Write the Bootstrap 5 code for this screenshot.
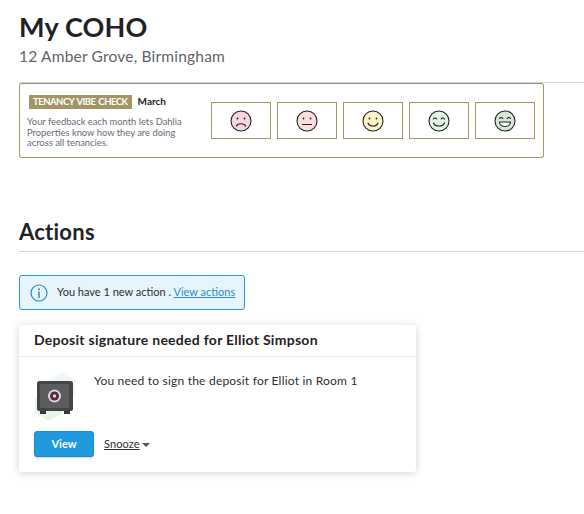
<!DOCTYPE html>
<html lang="en">
<head>
<meta charset="utf-8">
<title>My COHO</title>
<link href="https://cdn.jsdelivr.net/npm/bootstrap@5.3.0/dist/css/bootstrap.min.css" rel="stylesheet">
<style>
html,body{overflow:hidden}
body{font-family:Lato,"Noto Sans",sans-serif;color:#212529;background:#fff;width:584px;height:514px}
.page-wrap{padding:12px 0 0 19px}
.page-title{font-size:27px;font-weight:700;line-height:30px;margin:0;letter-spacing:.2px;color:#1f2226}
.page-sub{font-size:15.5px;line-height:20px;color:#5f6368;margin:4px 0 0;letter-spacing:.2px}
.rule{height:1px;background:#d4d4d4;border:0;opacity:1;margin:0}
.rule-top{margin-top:16px}
.vibe-box{width:525px;height:75px;border:1px solid #a39565;border-top-color:#8f8f8f;border-radius:3px;margin-top:0;padding:10px 8px 0 9px}
.vibe-left{width:173px;flex:none}
.vibe-tag{background:#a39565;color:#fff;font-size:9.5px;font-weight:700;line-height:14px;padding:0 4px;white-space:nowrap;letter-spacing:-.5px;word-spacing:1px}
.vibe-month{font-size:10px;font-weight:700;color:#1f2226;margin-left:6px}
.vibe-text{font-size:9.4px;line-height:10.5px;color:#6a6a78;margin:8px 0 0 -2px;max-width:165px}
.vibe-faces{margin-left:9px;margin-top:8px;gap:6px}
.face-btn{width:60px;height:37px;border:1px solid #a39565;background:#fff;padding:0;display:flex;align-items:center;justify-content:center;border-radius:0}
.actions-title{font-size:22px;font-weight:700;line-height:26px;margin:61px 0 6px;color:#1f2226;letter-spacing:.25px}
.notice{width:226px;height:35px;margin-top:23px;background:#e7f4fb;border:1px solid #1f9ade;border-radius:3px;font-size:11px;color:#2b2f33;padding:0 0 0 10px;gap:9px}
.notice a{color:#2b8ec9}
.task-card{width:397px;height:147px;margin-top:15px;border:0;border-radius:3px;box-shadow:0 1px 8px rgba(0,0,0,.18)}
.task-head{font-size:14px;font-weight:700;line-height:18px;padding:6px 15px 7px;border-bottom:1px solid #ececec;color:#1f2226;letter-spacing:.27px}
.task-body{padding:16px 15px 0}
.task-msg{font-size:12px;line-height:16px;margin:0 0 0 16px;color:#2b2f33;letter-spacing:.21px}
.task-actions{margin-top:10px;gap:10px}
.view-btn{width:60px;height:26px;background:#1f9ade;border:1px solid #1b8ecd;color:#fff;font-size:11px;font-weight:700;padding:0;border-radius:3px;box-shadow:0 1px 2px rgba(0,0,0,.2)}
.snooze-link{font-size:11px;color:#2b2f33;letter-spacing:.1px}
.caret-down{display:inline-block;width:0;height:0;border-left:4px solid transparent;border-right:4px solid transparent;border-top:4px solid #555;margin-left:2px;vertical-align:middle}
</style>
</head>
<body>
<div class="page-wrap">
  <h1 class="page-title">My COHO</h1>
  <p class="page-sub">12 Amber Grove, Birmingham</p>
  <hr class="rule rule-top">
  <div class="vibe-box d-flex">
    <div class="vibe-left">
      <div class="d-flex align-items-center"><span class="vibe-tag">TENANCY VIBE CHECK</span><span class="vibe-month">March</span></div>
      <p class="vibe-text">Your feedback each month lets Dahlia Properties know how they are doing across all tenancies.</p>
    </div>
    <div class="vibe-faces d-flex flex-grow-1">
      <button class="face-btn" aria-label="Very unhappy"><svg width="22" height="22" viewBox="0 0 22 22"><circle cx="11" cy="11" r="10" fill="#f5d5de" stroke="#222" stroke-width="1.1"/><circle cx="7.5" cy="8.5" r=".9" fill="#222"/><circle cx="14.5" cy="8.5" r=".9" fill="#222"/><path d="M6.5 16c1-3 8-3 9 0" fill="none" stroke="#222" stroke-width="1.2" stroke-linecap="round"/></svg></button>
      <button class="face-btn" aria-label="Unhappy"><svg width="22" height="22" viewBox="0 0 22 22"><circle cx="11" cy="11" r="10" fill="#fcdde0" stroke="#222" stroke-width="1.1"/><circle cx="7.5" cy="8.5" r=".9" fill="#222"/><circle cx="14.5" cy="8.5" r=".9" fill="#222"/><path d="M6.5 14.5h9" fill="none" stroke="#222" stroke-width="1.2" stroke-linecap="round"/></svg></button>
      <button class="face-btn" aria-label="OK"><svg width="22" height="22" viewBox="0 0 22 22"><circle cx="11" cy="11" r="10" fill="#fdf4c8" stroke="#222" stroke-width="1.1"/><circle cx="7.5" cy="8.5" r=".9" fill="#222"/><circle cx="14.5" cy="8.5" r=".9" fill="#222"/><path d="M6 13c1.5 4 8.5 4 10 0" fill="none" stroke="#222" stroke-width="1.2" stroke-linecap="round"/></svg></button>
      <button class="face-btn" aria-label="Happy"><svg width="22" height="22" viewBox="0 0 22 22"><circle cx="11" cy="11" r="10" fill="#e3f3e2" stroke="#222" stroke-width="1.1"/><path d="M5.5 9c.8-1.3 2.5-1.3 3.3 0M13.2 9c.8-1.3 2.5-1.3 3.3 0" fill="none" stroke="#222" stroke-width="1.1" stroke-linecap="round"/><path d="M5.5 13c1.5 4 9.5 4 11 0" fill="none" stroke="#222" stroke-width="1.2" stroke-linecap="round"/></svg></button>
      <button class="face-btn" aria-label="Very happy"><svg width="22" height="22" viewBox="0 0 22 22"><circle cx="11" cy="11" r="10" fill="#d5e8d6" stroke="#222" stroke-width="1.1"/><path d="M5.5 8.5c.8-1.3 2.5-1.3 3.3 0M13.2 8.5c.8-1.3 2.5-1.3 3.3 0" fill="none" stroke="#222" stroke-width="1.1" stroke-linecap="round"/><path d="M5.5 12h11c0 6-11 6-11 0z" fill="#fff" stroke="#222" stroke-width="1.1" stroke-linejoin="round"/></svg></button>
    </div>
  </div>
  <h2 class="actions-title">Actions</h2>
  <hr class="rule">
  <div class="notice d-flex align-items-center">
    <svg width="18" height="18" viewBox="0 0 18 18" class="flex-shrink-0"><circle cx="9" cy="9" r="8" fill="none" stroke="#1f8ecd" stroke-width="1.2"/><circle cx="9" cy="5.2" r="1" fill="#1f8ecd"/><path d="M9 8v5.5" stroke="#1f8ecd" stroke-width="1.5" stroke-linecap="round"/></svg>
    <span>You have 1 new action . <a href="#">View actions</a></span>
  </div>
  <div class="card task-card">
    <div class="task-head">Deposit signature needed for Elliot Simpson</div>
    <div class="task-body">
      <div class="d-flex">
        <svg width="44" height="48" viewBox="0 0 44 48" class="flex-shrink-0">
          <path d="M28 0l13 7v15l-13 7-13-7V7z" fill="#eef7f6"/>
          <path d="M15 17l14 8v15l-14 8-14-8V25z" fill="#e6f6e4"/>
          <rect x="3" y="8" width="36" height="30" rx="2.5" fill="#454547"/>
          <rect x="6" y="11" width="29" height="24" rx="1.5" fill="#5c5c5f"/>
          <circle cx="20.5" cy="23" r="6.5" fill="#d8d8d8"/><circle cx="20.5" cy="23" r="4.5" fill="#5b2a40"/><circle cx="20.5" cy="23" r="1.7" fill="#d9d9d9"/>
          <rect x="6" y="38" width="6" height="3" fill="#3a3a3c"/><rect x="30" y="38" width="6" height="3" fill="#3a3a3c"/>
        </svg>
        <p class="task-msg">You need to sign the deposit for Elliot in Room 1</p>
      </div>
      <div class="task-actions d-flex align-items-center">
        <button class="btn view-btn">View</button>
        <a href="#" class="snooze-link">Snooze<span class="caret-down"></span></a>
      </div>
    </div>
  </div>
</div>
</body>
</html>
